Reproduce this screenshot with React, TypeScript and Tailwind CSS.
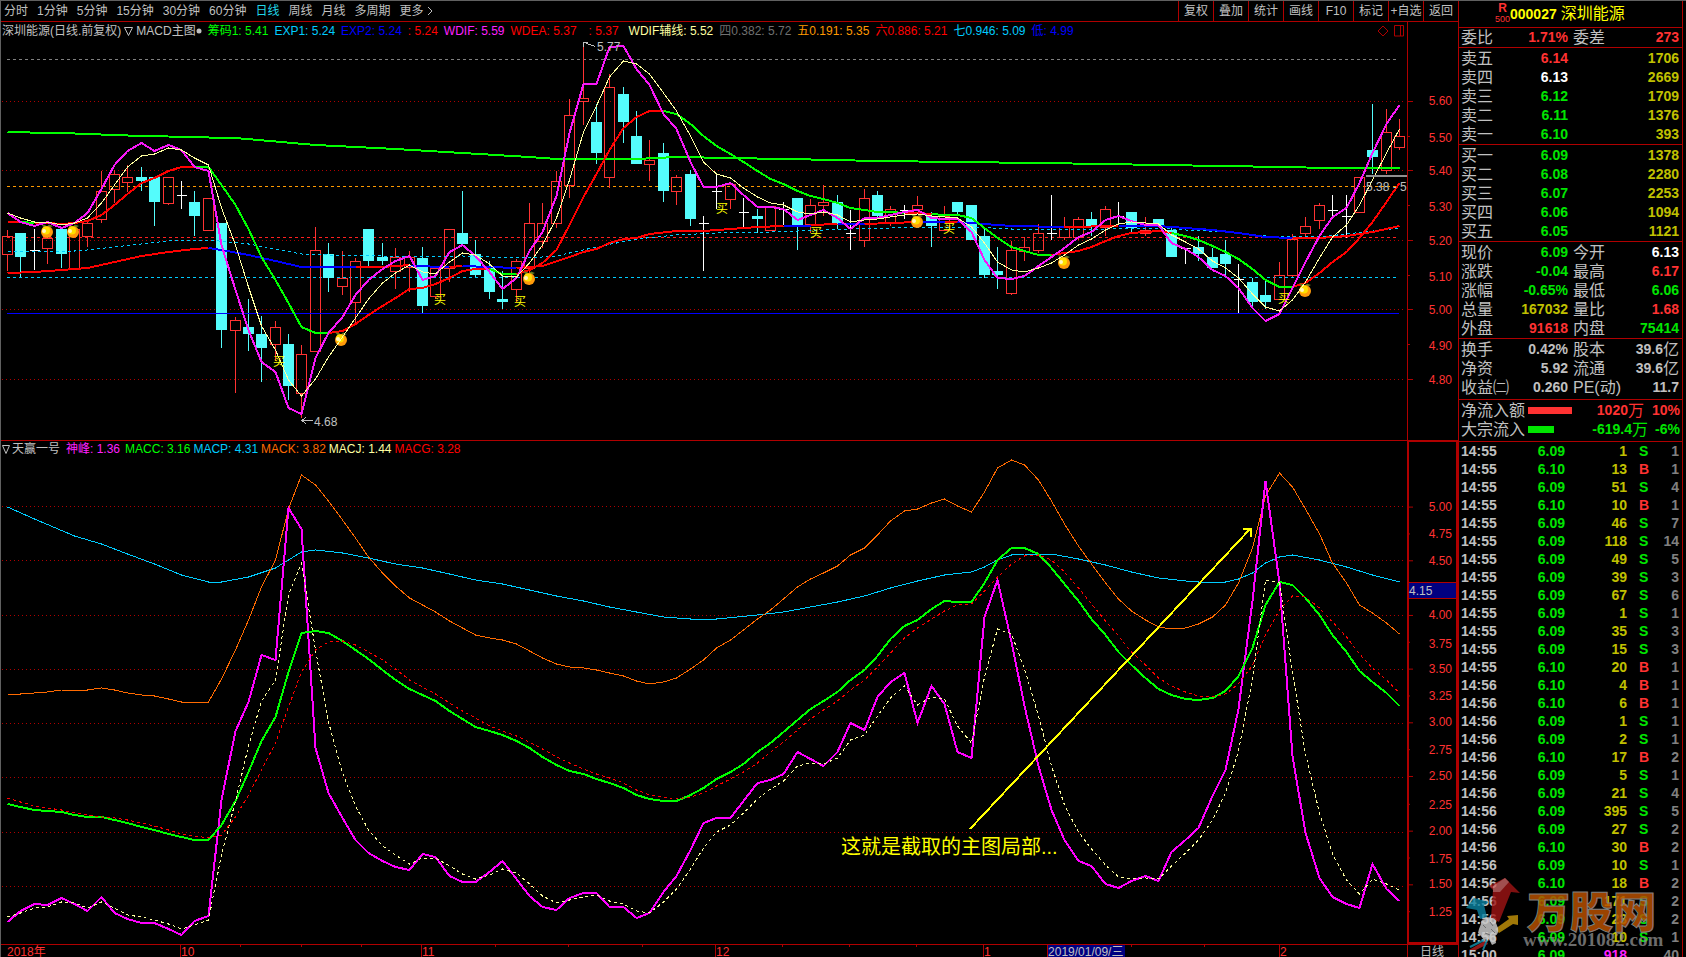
import React from "react";

const SANS = "font-['Liberation_Sans','Noto_Sans_CJK_SC',sans-serif]";

type Kind = "r" | "c" | "w";
// kind, high, body top, body bottom, low
type Candle = [Kind, number, number, number, number];

const X0 = 7;
const STEP = 13.385;
const barX = (i: number) => Math.round(X0 + STEP * i) + 0.5;

const CANDLES: Candle[] = [
  ["r", 230, 236, 254, 271], ["c", 233, 233, 257, 277], ["w", 229, 250, 250, 270], ["r", 236, 238, 248, 264],
  ["c", 229, 229, 254, 268], ["r", 229, 229, 268, 268], ["r", 220, 223, 236, 247], ["r", 171, 191, 219, 223],
  ["r", 170, 174, 189, 203], ["r", 165, 177, 182, 192], ["c", 167, 177, 181, 191], ["c", 177, 177, 202, 226],
  ["r", 177, 177, 203, 205], ["w", 181, 195, 195, 209], ["c", 191, 202, 216, 236], ["r", 198, 198, 230, 230],
  ["c", 223, 223, 330, 348], ["r", 317, 320, 330, 393], ["c", 299, 327, 334, 351], ["c", 316, 334, 348, 382],
  ["r", 321, 327, 344, 361], ["c", 334, 344, 386, 400], ["r", 345, 354, 393, 418], ["r", 227, 250, 351, 351],
  ["c", 243, 254, 278, 292], ["r", 251, 278, 286, 295], ["r", 258, 261, 302, 323], ["c", 229, 229, 261, 266],
  ["c", 243, 257, 261, 265], ["r", 248, 257, 271, 289], ["r", 251, 257, 267, 292], ["c", 247, 258, 306, 313],
  ["r", 268, 268, 296, 299], ["r", 229, 229, 268, 282], ["c", 191, 233, 244, 244], ["c", 240, 254, 275, 277],
  ["c", 261, 268, 292, 299], ["c", 271, 299, 302, 309], ["r", 259, 261, 289, 302], ["r", 203, 223, 268, 285],
  ["r", 203, 223, 241, 248], ["r", 171, 181, 223, 228], ["r", 99, 115, 185, 198], ["r", 43, 98, 101, 125],
  ["c", 104, 122, 153, 164], ["r", 74, 87, 177, 188], ["c", 87, 94, 122, 143], ["c", 111, 136, 164, 164],
  ["r", 140, 160, 164, 181], ["c", 143, 153, 191, 202], ["r", 175, 177, 191, 205], ["c", 170, 174, 219, 226],
  ["w", 216, 223, 223, 271], ["w", 174, 191, 191, 209], ["r", 184, 184, 199, 209], ["w", 198, 212, 212, 227],
  ["c", 209, 216, 219, 233], ["r", 206, 206, 230, 230], ["w", 202, 209, 209, 225], ["c", 198, 198, 225, 250],
  ["r", 199, 205, 224, 233], ["r", 185, 202, 205, 216], ["c", 195, 202, 223, 229], ["w", 210, 233, 233, 250],
  ["r", 189, 198, 240, 247], ["c", 191, 195, 216, 218], ["r", 206, 209, 223, 226], ["w", 205, 210, 210, 219],
  ["r", 196, 205, 209, 209], ["c", 212, 216, 226, 247], ["r", 206, 216, 230, 230], ["c", 202, 202, 212, 216],
  ["c", 205, 205, 240, 240], ["c", 228, 236, 275, 278], ["c", 247, 271, 275, 289], ["r", 241, 250, 293, 295],
  ["r", 237, 247, 251, 261], ["r", 224, 233, 250, 253], ["w", 195, 233, 233, 240], ["r", 217, 227, 237, 240],
  ["r", 217, 219, 237, 240], ["c", 212, 219, 226, 236], ["r", 206, 209, 227, 236], ["w", 202, 216, 216, 225],
  ["c", 212, 212, 228, 232], ["r", 217, 230, 233, 236], ["c", 219, 219, 226, 227], ["c", 226, 230, 257, 257],
  ["w", 248, 248, 248, 264], ["c", 236, 247, 254, 261], ["c", 248, 257, 268, 268], ["c", 240, 254, 264, 275],
  ["w", 264, 279, 279, 313], ["c", 278, 282, 302, 308], ["c", 281, 295, 302, 309], ["r", 262, 275, 299, 299],
  ["r", 234, 239, 275, 277], ["r", 217, 226, 233, 239], ["r", 203, 205, 220, 229], ["w", 195, 210, 210, 217],
  ["w", 195, 216, 216, 238], ["r", 177, 177, 212, 212], ["c", 104, 150, 157, 174], ["r", 109, 132, 170, 174],
  ["r", 119, 136, 147, 150],
];

const WDIF = [
  213, 222, 226, 222, 228, 223, 213, 189, 165, 151, 143, 151, 145, 150, 167, 171, 245, 290, 330, 362, 372, 408, 414,
  358, 333, 317, 295, 280, 269, 261, 256, 280, 276, 252, 245, 256, 272, 289, 278, 251, 232, 196, 133, 84, 84, 47, 46,
  69, 85, 114, 129, 162, 187, 187, 183, 195, 207, 207, 209, 220, 215, 210, 218, 229, 218, 218, 215, 212, 210, 218,
  219, 219, 232, 260, 278, 279, 276, 266, 257, 248, 237, 232, 220, 216, 221, 225, 225, 243, 249, 257, 270, 276, 288,
  308, 321, 314, 288, 262, 236, 217, 208, 183, 153, 124, 105,
];
const WDIF_AUX = [
  213, 218, 222, 222, 225, 223, 218, 203, 185, 167, 156, 154, 148, 150, 158, 165, 208, 245, 287, 326, 350, 380, 396,
  379, 357, 337, 318, 299, 283, 273, 265, 272, 274, 262, 253, 255, 264, 276, 277, 263, 245, 218, 180, 132, 106, 77, 61,
  64, 74, 93, 111, 136, 162, 174, 178, 188, 197, 203, 205, 212, 214, 212, 215, 222, 220, 219, 217, 215, 214, 216, 217,
  218, 227, 243, 262, 270, 272, 268, 263, 255, 245, 239, 230, 224, 222, 223, 224, 235, 242, 249, 261, 268, 278, 294,
  307, 311, 300, 282, 258, 237, 225, 205, 180, 153, 129,
];
const WDEA = [
  222, 222, 223, 223, 224, 223, 221, 215, 205, 194, 183, 178, 171, 167, 167, 167, 185, 205, 229, 257, 280, 303, 327,
  333, 333, 331, 324, 315, 306, 298, 289, 288, 284, 278, 271, 269, 269, 274, 274, 270, 263, 250, 225, 197, 174, 150,
  128, 117, 111, 111, 114, 124, 136, 146, 154, 162, 171, 179, 184, 191, 196, 199, 203, 208, 210, 212, 212, 213, 213,
  214, 215, 215, 218, 228, 238, 247, 251, 255, 255, 253, 251, 247, 241, 236, 233, 232, 231, 233, 236, 240, 246, 252,
  259, 269, 280, 287, 287, 283, 273, 262, 252, 238, 222, 202, 183,
];
const SHEN = [
  922, 911, 904, 905, 898, 904, 911, 897, 913, 919, 923, 923, 929, 935, 921, 916, 800, 731, 702, 655, 660, 508, 529,
  748, 793, 818, 840, 853, 861, 867, 870, 854, 857, 876, 882, 882, 872, 861, 879, 896, 907, 910, 898, 893, 893, 907,
  907, 918, 913, 892, 876, 850, 823, 818, 818, 801, 783, 780, 774, 752, 759, 766, 752, 723, 730, 697, 682, 673, 723,
  686, 704, 752, 758, 617, 580, 642, 706, 766, 810, 840, 861, 866, 884, 888, 881, 876, 881, 852, 840, 828, 796, 770,
  709, 601, 481, 583, 756, 833, 878, 897, 904, 908, 864, 889, 901,
];
const MACJ = [
  917, 913, 908, 907, 902, 903, 908, 902, 908, 915, 917, 920, 924, 929, 925, 920, 855, 801, 746, 701, 680, 595, 563,
  650, 722, 773, 806, 830, 846, 855, 864, 858, 858, 866, 874, 879, 875, 869, 873, 884, 896, 903, 900, 897, 895, 901,
  904, 911, 913, 902, 889, 869, 848, 832, 825, 813, 799, 789, 781, 766, 763, 764, 758, 740, 735, 716, 698, 686, 705,
  697, 699, 726, 743, 677, 629, 634, 669, 716, 766, 805, 832, 849, 865, 877, 879, 878, 879, 866, 853, 840, 820, 793,
  751, 679, 580, 583, 672, 754, 813, 854, 880, 894, 879, 884, 890,
];
const MACC = [
  804, 807, 810, 811, 812, 815, 817, 817, 820, 823, 827, 830, 834, 837, 840, 840, 825, 801, 772, 741, 717, 672, 633,
  631, 633, 641, 650, 659, 670, 680, 689, 695, 701, 711, 719, 727, 731, 735, 741, 748, 757, 765, 771, 774, 779, 783,
  788, 795, 799, 801, 801, 795, 788, 779, 772, 764, 752, 743, 732, 720, 709, 701, 692, 680, 670, 656, 639, 626, 620,
  609, 601, 602, 602, 583, 560, 548, 548, 554, 568, 584, 601, 619, 635, 652, 665, 678, 689, 695, 699, 700, 698, 691,
  676, 648, 605, 582, 585, 598, 615, 635, 652, 671, 682, 693, 706,
];
const MACG = [
  798, 802, 806, 808, 810, 813, 815, 817, 818, 820, 823, 826, 830, 834, 836, 838, 835, 817, 795, 770, 743, 707, 672,
  650, 642, 641, 645, 652, 660, 669, 680, 687, 694, 703, 711, 718, 726, 731, 736, 742, 749, 757, 763, 769, 774, 778,
  783, 790, 795, 797, 799, 797, 793, 786, 779, 772, 763, 752, 742, 730, 719, 710, 701, 690, 680, 667, 653, 638, 628,
  619, 611, 605, 604, 591, 577, 564, 556, 555, 560, 572, 588, 604, 621, 636, 652, 665, 678, 686, 692, 696, 697, 694,
  684, 665, 635, 610, 596, 597, 608, 622, 637, 654, 668, 680, 693,
];
const MACK = [
  694, 694, 693, 692, 690, 690, 690, 688, 690, 693, 695, 696, 699, 702, 702, 702, 679, 650, 620, 587, 560, 509, 475,
  485, 501, 520, 538, 557, 573, 586, 598, 605, 612, 621, 628, 635, 638, 640, 644, 651, 658, 664, 667, 668, 670, 673,
  676, 681, 684, 682, 678, 669, 660, 648, 640, 630, 619, 610, 599, 587, 579, 573, 566, 555, 548, 535, 521, 511, 509,
  503, 499, 506, 512, 492, 468, 460, 465, 480, 501, 524, 546, 564, 583, 599, 611, 620, 627, 629, 628, 624, 617, 605,
  583, 548, 496, 473, 487, 509, 534, 563, 583, 605, 613, 623, 634,
];

type Pt = [number, number];
const MACP: Pt[] = [
  [0, 507], [2, 519], [5, 536], [7, 544], [9, 554], [11, 564], [13, 575], [15, 582], [16, 582], [18, 577], [20, 568],
  [21, 560], [22, 552], [23, 550], [25, 553], [27, 558], [29, 564], [31, 568], [33, 574], [35, 580], [37, 584],
  [39, 590], [41, 596], [43, 601], [45, 607], [47, 612], [49, 617], [51, 619], [53, 619], [56, 615], [58, 612],
  [60, 607], [62, 602], [64, 596], [66, 588], [68, 581], [70, 575], [72, 572], [73, 567], [74, 560], [75, 555],
  [76, 554], [78, 554], [80, 559], [82, 565], [84, 572], [86, 578], [88, 581], [89, 582], [91, 582], [92, 579],
  [93, 573], [94, 563], [95, 557], [96, 555], [98, 560], [100, 567], [102, 575], [104, 582],
];
const CHIP: Pt[] = [
  [0, 132], [5, 133.5], [9, 135.5], [15, 137.5], [17, 138], [23, 145], [29, 149], [34, 153], [39, 157], [41, 159],
  [47, 159], [50, 157], [54, 158], [60, 159.5], [65, 161], [71, 162], [77, 163], [82, 164], [86, 165], [91, 166],
  [95, 167], [99, 168], [104, 168],
];
const EXP1: Pt[] = [
  [0, 251], [5, 251], [6, 250], [8, 247], [10, 244], [12, 241], [15, 240], [18, 244], [20, 249], [22, 254], [24, 255],
  [28, 256], [30, 257], [34, 256], [38, 258], [40, 257], [41, 256], [42, 253], [44, 247], [47, 239], [50, 235],
  [53, 233], [57, 232], [63, 229], [69, 227], [72, 227], [75, 229], [82, 229], [86, 228], [88, 230], [91, 232],
  [94, 236], [98, 237], [100, 234], [104, 228],
];
const EXP2: { up: boolean; pts: Pt[] }[] = [
  { up: true, pts: [[0, 273], [2, 272], [4, 270], [6, 268], [8, 262], [10, 256], [12, 252], [14, 249], [15, 248]] },
  { up: false, pts: [[15, 248], [16, 250], [18, 255], [20, 261], [22, 267], [26, 267]] },
  { up: true, pts: [[26, 267], [28, 267], [30, 265]] },
  { up: false, pts: [[30, 266], [33, 267]] },
  { up: true, pts: [[33, 267], [34, 266]] },
  { up: false, pts: [[34, 266], [38, 268]] },
  { up: true, pts: [[38, 268], [40, 266], [42, 257], [43, 252], [44, 249], [45, 243], [46, 239], [47, 238], [48, 234], [50, 231], [52, 231], [54, 229], [56, 227], [58, 226]] },
  { up: false, pts: [[58, 226], [60, 226]] },
  { up: true, pts: [[60, 225], [62, 224]] },
  { up: false, pts: [[62, 224], [64, 224]] },
  { up: true, pts: [[64, 224], [68, 222]] },
  { up: false, pts: [[68, 222], [70, 222]] },
  { up: true, pts: [[70, 222], [71, 222]] },
  { up: false, pts: [[71, 222], [73, 224], [75, 226], [79, 227]] },
  { up: true, pts: [[79, 227], [83, 226]] },
  { up: false, pts: [[83, 226], [86, 226], [88, 228], [90, 230], [92, 233], [94, 237], [96, 238]] },
  { up: true, pts: [[96, 238], [98, 238], [100, 236], [102, 232], [104, 226]] },
];
const WDEA_RUNS: { from: number; to: number; up: boolean }[] = [
  { from: 0, to: 1, up: true }, { from: 1, to: 2, up: false }, { from: 2, to: 14, up: true },
  { from: 14, to: 24, up: false }, { from: 24, to: 36, up: true }, { from: 36, to: 38, up: false },
  { from: 38, to: 49, up: true }, { from: 49, to: 67, up: false }, { from: 67, to: 69, up: true },
  { from: 69, to: 78, up: false }, { from: 78, to: 87, up: true }, { from: 87, to: 96, up: false },
  { from: 96, to: 104, up: true },
];

const seq = (ys: number[], start = 0) => ys.map((y, k) => `${barX(start + k)},${y}`).join(" ");
const sparse = (pts: Pt[]) => pts.map(([i, y]) => `${barX(i)},${y}`).join(" ");

function Line({ points, color, width = 1, dash }: { points: string; color: string; width?: number; dash?: string }) {
  return <polyline points={points} fill="none" stroke={color} strokeWidth={width} strokeDasharray={dash} />;
}

// Plot areas, in chart units
const TOP = { x: 1, y: 22, w: 1406, h: 418 };
const LOW = { x: 1, y: 441, w: 1406, h: 503 };
type Area = typeof TOP;

function Mark({ area, x, y, className, children }: { area: Area; x: number; y: number; className: string; children: React.ReactNode }) {
  const style = { left: `${((x - area.x) / area.w) * 100}%`, top: `${((y - area.y) / area.h) * 100}%` };
  return <span className={`absolute -translate-y-1/2 whitespace-nowrap ${className}`} style={style}>{children}</span>;
}

function CandleBar({ c, i }: { c: Candle; i: number }) {
  const [kind, hi, top, bottom, lo] = c;
  const x = barX(i);
  if (kind === "w")
    return <path d={`M${x} ${hi}V${lo}M${x - 5} ${top + 0.5}H${x + 5}`} stroke="#ffffff" fill="none" />;
  if (kind === "c")
    return (
      <g>
        <path d={`M${x} ${hi}V${lo}`} stroke="#54fcfc" />
        <rect x={x - 5.5} y={top} width="11" height={bottom - top} fill="#54fcfc" />
      </g>
    );
  return (
    <path
      d={`M${x} ${hi}V${top}M${x} ${bottom}V${lo}M${x - 5} ${top + 0.5}H${x + 5}V${bottom + 0.5}H${x - 5}Z`}
      stroke="#ff3232"
      fill="none"
    />
  );
}

const ORANGES: Pt[] = [[47, 232], [73, 232], [341, 340], [529, 279], [917, 222], [1064, 263], [1305, 291]];
const BUYS: Pt[] = [[279, 362], [440, 300], [520, 302], [722, 209], [816, 233], [949, 229], [1284, 299]];

function Orange({ x, y }: { x: number; y: number }) {
  return (
    <g shapeRendering="auto">
      <path d={`M${x - 6} ${y - 8}l4 1 2 1.500 2-2 4 1.500 -3 1.500 -3-.5 -3 1z`} fill="#5f7a1e" />
      <circle cx={x} cy={y} r="6" fill="#ff9a0a" />
      <circle cx={x - 1} cy={y - 1.5} r="4" fill="#ffdf00" />
      <circle cx={x - 3} cy={y - 1} r="2" fill="#fff6c0" />
    </g>
  );
}

function MainPlot() {
  return (
    <svg className="absolute inset-0 h-full w-full" viewBox="1 22 1406 418" preserveAspectRatio="none" shapeRendering="crispEdges" aria-hidden="true">
      {[101.5, 170.5, 240.5, 309.5, 379.5].map((y) => (
        <path key={y} d={`M2 ${y}H1404`} stroke="#b00000" strokeDasharray="1 3" />
      ))}
      <path d="M7 59.500H1396" stroke="#808080" strokeDasharray="3 3" />
      <path d="M7 186.500H1396" stroke="#ff9900" strokeDasharray="3 3" />
      <path d="M7 237.500H1396" stroke="#ff2020" strokeDasharray="3 3" />
      <path d="M7 277.500H1396" stroke="#00ccff" strokeDasharray="3 3" />
      {CANDLES.map((c, i) => <CandleBar key={i} c={c} i={i} />)}
      <path d="M7 313.500H1399" stroke="#0000ff" />
      <Line points={sparse(EXP1)} color="#00ccff" dash="3 3" />
      {EXP2.map((r, k) => <Line key={k} points={sparse(r.pts)} color={r.up ? "#ff0000" : "#0000ff"} width={2} />)}
      <Line points={sparse(CHIP)} color="#00ff00" width={2} />
      {WDEA_RUNS.map((r) => (
        <Line key={r.from} points={seq(WDEA.slice(r.from, r.to + 1), r.from)} color={r.up ? "#ff0000" : "#00ff00"} width={2} />
      ))}
      {ORANGES.map(([x, y]) => <Orange key={x} x={x} y={y} />)}
      <Line points={seq(WDIF)} color="#f818f8" width={2} />
      <Line points={seq(WDIF_AUX)} color="#ffffa0" />
      <path d="M583 42L595 46.500M583 42V47M583 42H588" stroke="#c0c0c0" fill="none" />
      <path d="M302 420.500H313M306 417L302 420.500L306 424" stroke="#c0c0c0" fill="none" />
      <path d="M1366 176H1407" stroke="#909090" strokeWidth="2" />
    </svg>
  );
}

function LowPlot() {
  return (
    <svg className="absolute inset-0 h-full w-full" viewBox="1 441 1406 503" preserveAspectRatio="none" shapeRendering="crispEdges" aria-hidden="true">
      {[506.5, 560.5, 615.5, 669.5, 723.5, 777.5, 832.5, 886.5].map((y) => (
        <path key={y} d={`M2 ${y}H1404`} stroke="#b00000" strokeDasharray="1 3" />
      ))}
      <Line points={sparse(MACP)} color="#00ccff" />
      <Line points={seq(MACK)} color="#ff6a00" />
      <Line points={seq(SHEN)} color="#ff00ff" width={2} />
      <Line points={seq(MACC)} color="#00ff00" width={2} />
      <Line points={seq(MACJ)} color="#ffffa0" dash="3 3" />
      <Line points={seq(MACG)} color="#ff0000" dash="3 3" />
      <path d="M970 829L1251 528M1243 529H1251V537" stroke="#ffff00" strokeWidth="2" fill="none" />
    </svg>
  );
}

const PERIODS = ["分时", "1分钟", "5分钟", "15分钟", "30分钟", "60分钟", "日线", "周线", "月线", "多周期"];
const TOOLS = ["复权", "叠加", "统计", "画线", "F10", "标记", "+自选", "返回"];

const MAIN_AXIS: [number, string][] = [
  [101, "5.60"], [138, "5.50"], [171, "5.40"], [207, "5.30"], [241, "5.20"], [277, "5.10"], [310, "5.00"], [346, "4.90"], [380, "4.80"],
];
const LOW_AXIS: [number, string][] = [
  [506, "5.00"], [534, "4.75"], [561, "4.50"], [615, "4.00"], [644, "3.75"], [669, "3.50"], [697, "3.25"], [723, "3.00"],
  [751, "2.75"], [777, "2.50"], [806, "2.25"], [832, "2.00"], [860, "1.75"], [886, "1.50"], [914, "1.25"],
];

function AxisLabels({ area, items, right }: { area: Area; items: [number, string][]; right: string }) {
  return (
    <>
      {items.map(([y, t]) => (
        <span key={t} className={`absolute -translate-y-1/2 text-[#ff3232] ${right}`} style={{ top: `${((y - area.y) / area.h) * 100}%` }}>
          {t}
        </span>
      ))}
    </>
  );
}

type Cell = { l: string; v: React.ReactNode; c: string };
const G = "text-[#00e600]";
const R = "text-[#ff3232]";
const W = "text-white";
const Y = "text-[#c0c000]";
const N = "text-[#c0c0c0]";

const SELLS: [string, string, string, string][] = [
  ["卖五", "6.14", R, "1706"], ["卖四", "6.13", W, "2669"], ["卖三", "6.12", G, "1709"], ["卖二", "6.11", G, "1376"], ["卖一", "6.10", G, "393"],
];
const BIDS: [string, string, string, string][] = [
  ["买一", "6.09", G, "1378"], ["买二", "6.08", G, "2280"], ["买三", "6.07", G, "2253"], ["买四", "6.06", G, "1094"], ["买五", "6.05", G, "1121"],
];
const Yi = () => <span className="text-base/[19px] font-normal">亿</span>;
const STATS: [Cell, Cell][] = [
  [{ l: "现价", v: "6.09", c: G }, { l: "今开", v: "6.13", c: W }],
  [{ l: "涨跌", v: "-0.04", c: G }, { l: "最高", v: "6.17", c: R }],
  [{ l: "涨幅", v: "-0.65%", c: G }, { l: "最低", v: "6.06", c: G }],
  [{ l: "总量", v: "167032", c: Y }, { l: "量比", v: "1.68", c: R }],
  [{ l: "外盘", v: "91618", c: R }, { l: "内盘", v: "75414", c: G }],
];
const FUNDS: [Cell, Cell][] = [
  [{ l: "换手", v: "0.42%", c: N }, { l: "股本", v: <>39.6<Yi /></>, c: N }],
  [{ l: "净资", v: "5.92", c: N }, { l: "流通", v: <>39.6<Yi /></>, c: N }],
  [{ l: "收益㈡", v: "0.260", c: N }, { l: "PE(动)", v: "11.7", c: N }],
];

function Pair({ cell }: { cell: Cell }) {
  return (
    <div className="flex h-[19px] items-center justify-between">
      <dt className="text-base/[19px] text-[#c0c0c0]">{cell.l}</dt>
      <dd className={`flex items-center text-sm/[19px] font-bold ${cell.c}`}>{cell.v}</dd>
    </div>
  );
}

function PairRows({ rows, className }: { rows: [Cell, Cell][]; className: string }) {
  return (
    <dl className={`border-b border-[#b00000] pl-[2px] pr-[3px] ${className}`}>
      {rows.map(([a, b]) => (
        <div key={a.l} className="grid grid-cols-[107px_1fr] gap-x-[5px]">
          <Pair cell={a} />
          <Pair cell={b} />
        </div>
      ))}
    </dl>
  );
}

function Book({ rows, label }: { rows: [string, string, string, string][]; label: string }) {
  return (
    <div className="border-b border-[#b00000] pt-px">
      <table aria-label={label} className="w-full table-fixed border-collapse">
        <tbody>
          {rows.map(([l, p, c, q]) => (
            <tr key={l} className="h-[19px]">
              <th scope="row" className="w-[50px] p-0 pl-[2px] text-left text-base/[19px] font-normal text-[#c0c0c0]">{l}</th>
              <td className={`w-[59px] p-0 text-right text-sm/[19px] font-bold ${c}`}>{p}</td>
              <td className="p-0 pr-[3px] text-right text-sm/[19px] font-bold text-[#c0c000]">{q}</td>
            </tr>
          ))}
        </tbody>
      </table>
    </div>
  );
}

// time, price, volume, side, count
const TICKS: [string, string, string, string, string][] = [
  ["14:55", "6.09", "1", "S", "1"], ["14:55", "6.10", "13", "B", "1"], ["14:55", "6.09", "51", "S", "4"],
  ["14:55", "6.10", "10", "B", "1"], ["14:55", "6.09", "46", "S", "7"], ["14:55", "6.09", "118", "S", "14"],
  ["14:55", "6.09", "49", "S", "5"], ["14:55", "6.09", "39", "S", "3"], ["14:55", "6.09", "67", "S", "6"],
  ["14:55", "6.09", "1", "S", "1"], ["14:55", "6.09", "35", "S", "3"], ["14:55", "6.09", "15", "S", "3"],
  ["14:55", "6.10", "20", "B", "1"], ["14:56", "6.10", "4", "B", "1"], ["14:56", "6.10", "6", "B", "1"],
  ["14:56", "6.09", "1", "S", "1"], ["14:56", "6.09", "2", "S", "1"], ["14:56", "6.10", "17", "B", "2"],
  ["14:56", "6.09", "5", "S", "1"], ["14:56", "6.09", "21", "S", "4"], ["14:56", "6.09", "395", "S", "5"],
  ["14:56", "6.09", "27", "S", "2"], ["14:56", "6.10", "30", "B", "2"], ["14:56", "6.09", "10", "S", "1"],
  ["14:56", "6.10", "18", "B", "2"], ["14:56", "6.09", "171", "S", "2"], ["14:56", "6.09", "23", "S", "2"],
  ["14:56", "6.09", "10", "S", "1"], ["15:00", "6.09", "918", "", "40"],
];

function Watermark() {
  return (
    <svg className="absolute left-[4px] top-[430px] h-[82px] w-[204px]" viewBox="1463 872 204 82" aria-hidden="true">
      <g opacity="0.8">
        <polygon points="1505,878 1520,893 1511,892 1499,922 1491,918 1493,890 1489,886" fill="#a01414" />
        <polygon points="1493,886 1505,878 1509,882 1500,892 1493,892" fill="#c86464" />
        <polygon points="1466,908 1474,898 1489,902 1484,905 1487,917 1480,919 1477,910" fill="#0a82a0" />
        <polygon points="1495,929 1509,919 1507,916 1518,915 1518,925 1513,924 1499,933" fill="#c8960a" />
        <path d="M1469 950L1486 940L1488 944L1476 950Z" fill="#b41e1e" />
        <path d="M1483 950L1487 940M1470 947L1484 940" stroke="#1496b4" strokeWidth="2" />
      </g>
      <path d="M1481 924q-1-4 4-5 2-3 6-1 5 0 5 5l2 5q1 6-3 8l1 7-4 2-3-6-5 1-3-4-3-3 1-4z" fill="#c8c8c8" opacity="0.85" />
      <path d="M1483 925l3 3m4-6l3 4m-8 7l5 2m1-6l4 4" stroke="#6e6e6e" strokeWidth="1" />
      <text x="1527" y="928" fontSize="43" fontWeight="900" fontFamily="'Noto Sans CJK SC', sans-serif" fill="#b85000" fillOpacity="0.85" stroke="#808080" strokeWidth="1">万股网</text>
      <text x="1523" y="946" fontSize="19" fontWeight="700" fontFamily="'Liberation Serif', serif" fill="#909090" fillOpacity="0.75">www.201082.com</text>
    </svg>
  );
}

function QuotePanel() {
  return (
    <aside className="w-[228px] shrink-0 pr-[3px]">
      <div className="flex h-full flex-col overflow-hidden border-x border-[#b00000]">
        <h1 className="flex h-[27px] shrink-0 items-center border-b border-[#b00000] pl-[36px]">
          <span className="flex w-[15px] flex-col items-center text-[#ff3232]">
            <span className="text-xs/[11px] font-bold">R</span>
            <span className="text-[9px]/[11px]">500</span>
          </span>
          <span className="text-sm font-bold text-[#ffff00]">000027</span>
          <span className="pl-[4px] text-base font-normal text-[#ffff00]">深圳能源</span>
        </h1>
        <PairRows className="h-[20px]" rows={[[{ l: "委比", v: "1.71%", c: R }, { l: "委差", v: "273", c: R }]]} />
        <Book rows={SELLS} label="卖盘" />
        <Book rows={BIDS} label="买盘" />
        <PairRows className="pt-px" rows={STATS} />
        <PairRows className="pb-[2px] pt-px" rows={FUNDS} />
        <dl className="border-b border-[#b00000] pb-[3px] pl-[2px] pr-[2px]">
          <div className="grid h-[19px] grid-cols-[67px_1fr_36px] items-center text-[#ff3232]">
            <dt className="text-base/[19px] text-[#c0c0c0]">净流入额</dt>
            <dd className="flex items-center justify-between text-sm font-bold">
              <span className="h-[7px] w-[44px] bg-[#ff3232]" />
              <span className="flex items-center">1020<span className="text-base/[19px] font-normal">万</span></span>
            </dd>
            <dd className="text-right text-sm font-bold">10%</dd>
          </div>
          <div className="grid h-[19px] grid-cols-[67px_1fr_32px] items-center text-[#00e600]">
            <dt className="text-base/[19px] text-[#c0c0c0]">大宗流入</dt>
            <dd className="flex items-center justify-between text-sm font-bold">
              <span className="h-[7px] w-[26px] bg-[#00e600]" />
              <span className="flex items-center">-619.4<span className="text-base/[19px] font-normal">万</span></span>
            </dd>
            <dd className="text-right text-sm font-bold">-6%</dd>
          </div>
        </dl>
        <div className="relative min-h-0 flex-1 overflow-hidden">
          <table aria-label="分笔成交" className="w-full table-fixed border-collapse text-sm/[18px] font-bold">
            <tbody>
              {TICKS.map(([t, p, q, s, n], k) => (
                <tr key={k} className="h-[18px]">
                  <td className="w-[51px] p-0 pl-[2px] text-[#c0c0c0]">{t}</td>
                  <td className="w-[55px] p-0 text-right text-[#00e600]">{p}</td>
                  <td className={`w-[62px] p-0 text-right ${s ? "text-[#c0c000]" : "text-[#ff20ff]"}`}>{q}</td>
                  <td className={`w-[24px] p-0 pl-[12px] ${s === "B" ? "text-[#ff3232]" : "text-[#00e600]"}`}>{s}</td>
                  <td className="p-0 pr-[3px] text-right text-[#808080]">{n}</td>
                </tr>
              ))}
            </tbody>
          </table>
          <Watermark />
        </div>
      </div>
    </aside>
  );
}

const MONTHS: [number, string][] = [[180, "10"], [421, "11"], [715, "12"], [983, "1"], [1279, "2"]];
const MINOR = [240, 301, 361, 495, 568, 642, 782, 849, 916, 1131, 1204];

export default function App() {
  return (
    <div className={`flex h-screen overflow-hidden border-t border-[#606060] bg-black text-xs text-[#c0c0c0] ${SANS}`}>
      <main className="flex min-w-0 flex-1 flex-col border-l border-[#606060]">
        <header className="flex h-[21px] shrink-0 items-stretch justify-between border-b border-[#b00000]">
          <nav className="flex items-center gap-[9px] whitespace-nowrap pl-[3px]">
            {PERIODS.map((p) => (
              <button key={p} type="button" className={p === "日线" ? "text-[#20d8e8]" : "text-[#c0c0c0]"}>{p}</button>
            ))}
            <button type="button" className="flex items-center gap-[3px]">
              更多
              <svg className="h-[10px] w-[6px]" viewBox="0 0 6 10" fill="none" stroke="#c0c0c0" aria-hidden="true"><path d="M1 1L5 5L1 9" /></svg>
            </button>
          </nav>
          <div className="flex shrink-0">
            {TOOLS.map((t) => (
              <button key={t} type="button" className="w-[35px] whitespace-nowrap border-l border-[#b00000] text-center">{t}</button>
            ))}
          </div>
        </header>

        <section className="flex min-h-0 flex-[418_1_0%]">
          <div className="relative min-w-0 flex-1 overflow-hidden">
            <MainPlot />
            <div className="relative flex h-[18px] items-center justify-between pl-px pr-[2px]">
              <div className="flex items-center gap-[6px] whitespace-nowrap">
                <span className="flex items-center gap-[3px]">
                  <span>深圳能源(日线.前复权)</span>
                  <svg className="h-[9px] w-[9px]" viewBox="0 0 9 9" fill="none" stroke="#c0c0c0" aria-hidden="true"><path d="M.5 .5H8.500L4.500 8.500Z" /></svg>
                  <span className="flex items-center">
                    MACD主图
                    <svg className="h-[6px] w-[6px]" viewBox="0 0 6 6" aria-hidden="true"><circle cx="3" cy="3" r="2.500" fill="#c0c0c0" /></svg>
                  </span>
                </span>
                <span className="text-[#00ff00]">筹码1: 5.41</span>
                <span className="text-[#00ccff]">EXP1: 5.24</span>
                <span className="text-[#0000ff]">EXP2: 5.24</span>
                <span className="text-[#ff0000]">: 5.24</span>
                <span className="text-[#ff20ff]">WDIF: 5.59</span>
                <span className="text-[#ff0000]">WDEA: 5.37</span>
                <span className="pl-[6px] text-[#ff0000]">: 5.37</span>
                <span className="pl-[4px] text-[#ffffa0]">WDIF辅线: 5.52</span>
                <span className="text-[#707070]">四0.382: 5.72</span>
                <span className="text-[#ff9900]">五0.191: 5.35</span>
                <span className="text-[#ff0000]">六0.886: 5.21</span>
                <span className="text-[#00ccff]">七0.946: 5.09</span>
                <span className="text-[#0000ff]">低: 4.99</span>
              </div>
              <svg className="h-[12px] w-[28px]" viewBox="0 0 28 12" fill="none" stroke="#b00000" aria-hidden="true">
                <path d="M6 1L11 6L6 11L1 6Z" />
                <path d="M17.500 .5H26.500V11H17.500ZM23.500 .5V11" />
              </svg>
            </div>
            <Mark area={TOP} x={597} y={47} className="">5.77</Mark>
            <Mark area={TOP} x={314} y={422} className="">4.68</Mark>
            <Mark area={TOP} x={1366} y={187} className="">5.38 - 5</Mark>
            {BUYS.map(([x, y]) => (
              <Mark key={x} area={TOP} x={x} y={y} className="-translate-x-1/2 text-[#ffff00]">买</Mark>
            ))}
          </div>
          <div className="relative w-[51px] shrink-0 border-l border-[#b00000]">
            <svg className="absolute left-0 top-0 h-full w-[6px]" viewBox="0 22 6 418" preserveAspectRatio="none" shapeRendering="crispEdges" stroke="#b00000" aria-hidden="true">
              {[101.5, 170.5, 240.5, 309.5, 379.5].map((y) => <path key={y} d={`M0 ${y}H5`} />)}
              {[136.5, 205.5, 275.5, 344.5].map((y) => <path key={y} d={`M0 ${y}H2`} />)}
            </svg>
            <AxisLabels area={TOP} items={MAIN_AXIS} right="right-[6px]" />
          </div>
        </section>

        <section className="flex min-h-0 flex-[503_1_0%] border-y border-[#b00000]">
          <div className="relative min-w-0 flex-1 overflow-hidden">
            <LowPlot />
            <div className="relative flex h-[16px] items-center gap-[3px] whitespace-nowrap pl-px">
              <span className="flex items-center gap-[2px] pr-[3px]">
                <svg className="h-[9px] w-[8px]" viewBox="0 0 8 9" fill="none" stroke="#c0c0c0" aria-hidden="true"><path d="M.5 .5H7.500L4 8.500Z" /></svg>
                天赢一号
              </span>
              <span className="pr-[2px] text-[#ff20ff]">神峰: 1.36</span>
              <span className="text-[#00ff00]">MACC: 3.16</span>
              <span className="text-[#00ccff]">MACP: 4.31</span>
              <span className="text-[#ff6a00]">MACK: 3.82</span>
              <span className="text-[#ffffa0]">MACJ: 1.44</span>
              <span className="text-[#ff0000]">MACG: 3.28</span>
            </div>
            <Mark area={LOW} x={841} y={847} className="text-xl text-[#ffff00]">这就是截取的主图局部...</Mark>
          </div>
          <div className="relative w-[51px] shrink-0 border-2 border-t border-[#b00000]">
            <svg className="absolute left-0 top-0 h-full w-[6px]" viewBox="0 441 6 503" preserveAspectRatio="none" shapeRendering="crispEdges" stroke="#b00000" aria-hidden="true">
              {[506.5, 560.5, 615.5, 669.5, 723.5, 777.5, 832.5, 886.5].map((y) => <path key={y} d={`M0 ${y}H4`} />)}
              {[533.5, 642.5, 696.5, 750.5, 805.5, 859.5, 913.5].map((y) => <path key={y} d={`M0 ${y}H1`} />)}
            </svg>
            <AxisLabels area={LOW} items={LOW_AXIS} right="right-[4px]" />
            <span className="absolute inset-x-0 top-[28%] flex h-[17px] items-center border-y border-[#b00000] bg-[#000080]">4.15</span>
          </div>
        </section>

        <footer className="flex h-[12px] shrink-0 overflow-hidden leading-[15px] text-[#ff3232]">
          <div className="relative min-w-0 flex-1">
            <span className="pl-[6px]">2018年</span>
            {MINOR.map((x) => (
              <span key={x} className="absolute top-0 h-[2px] w-px bg-[#b00000]" style={{ left: `${((x - 1) / 1406) * 100}%` }} />
            ))}
            {MONTHS.map(([x, t]) => (
              <span key={t} className="absolute top-0 border-l border-[#b00000]" style={{ left: `${((x - 1) / 1406) * 100}%` }}>{t}</span>
            ))}
            <span className="absolute left-[74.4%] top-0 w-[78px] whitespace-nowrap border-l border-[#b00000] bg-[#000080] text-[#c0c0c0]">2019/01/09/三</span>
          </div>
          <div className="w-[51px] shrink-0 border-l border-[#b00000] pl-[12px] text-[#c0c0c0]">日线</div>
        </footer>
      </main>
      <QuotePanel />
    </div>
  );
}
